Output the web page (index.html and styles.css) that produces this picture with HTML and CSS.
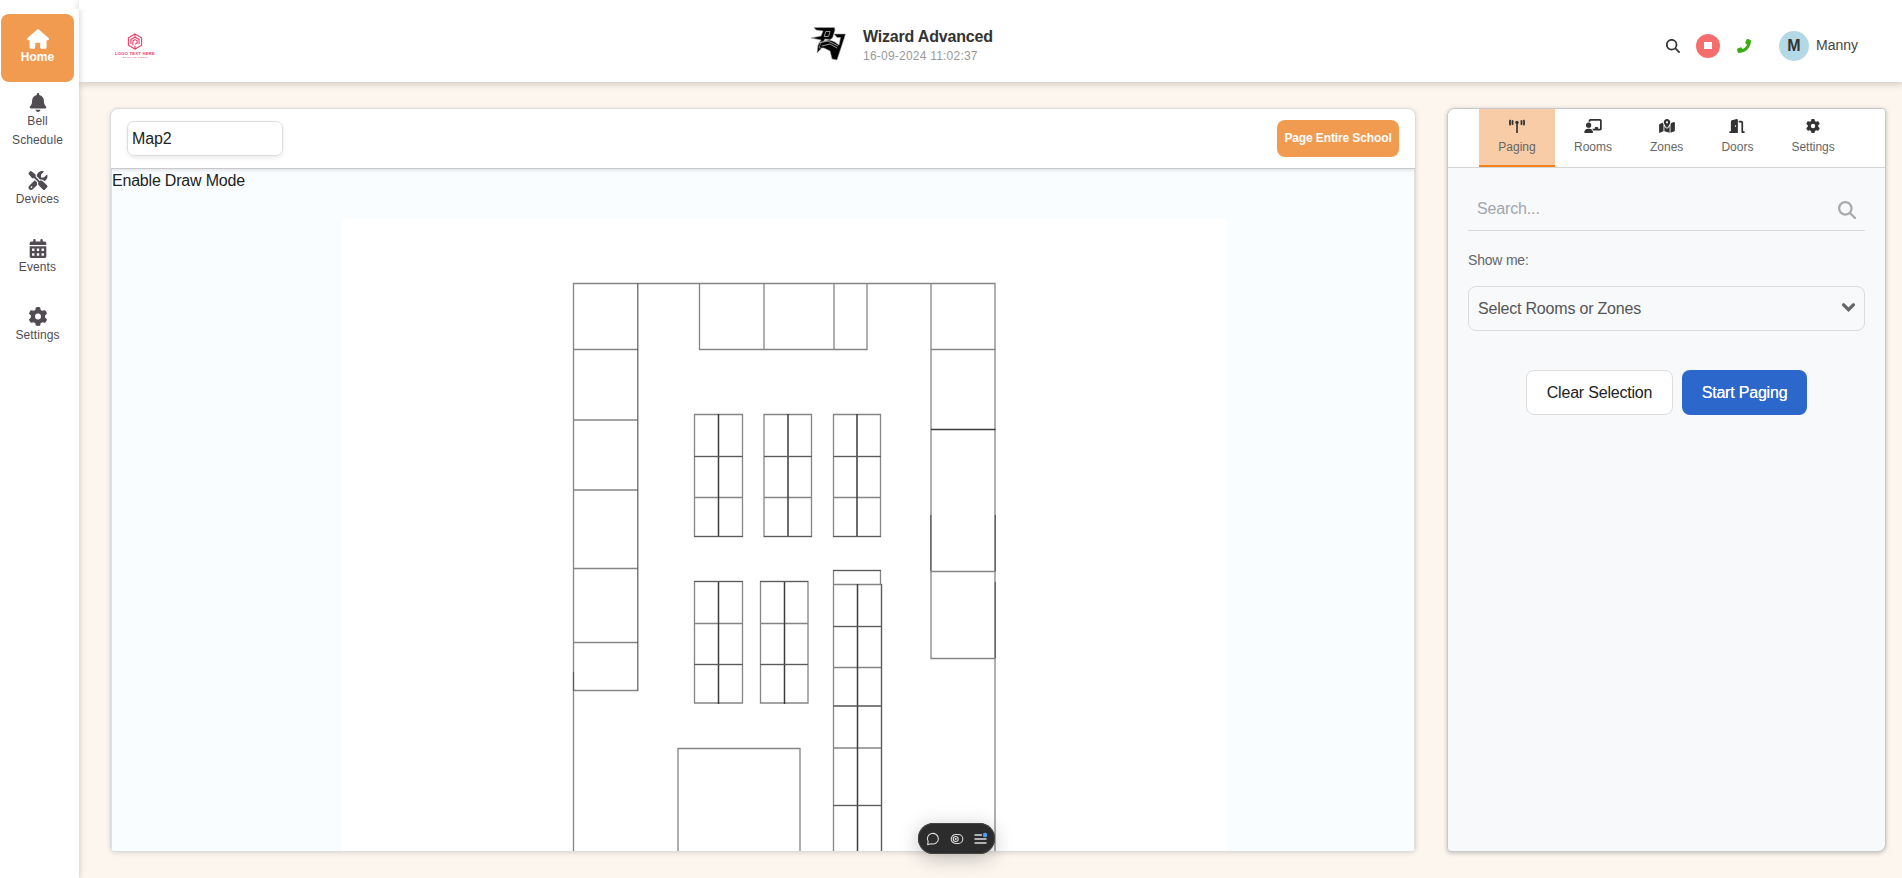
FILE: index.html
```html
<!DOCTYPE html>
<html lang="en">
<head>
<meta charset="utf-8">
<title>Wizard Advanced</title>
<link rel="stylesheet" href="styles.css">
</head>
<body>
<svg class="defs" width="0" height="0">
  <symbol id="gear" viewBox="0 0 512 512"><path d="M495.9 166.6c3.200 8.700.5 18.400-6.400 24.600l-43.300 39.400c1.100 8.300 1.700 16.800 1.700 25.400s-.6 17.100-1.700 25.400l43.300 39.400c6.900 6.200 9.600 15.900 6.400 24.600c-4.400 11.900-9.700 23.300-15.800 34.300l-4.700 8.100c-6.600 11-14 21.400-22.100 31.200c-5.900 7.200-15.700 9.600-24.500 6.800l-55.700-17.700c-13.400 10.300-28.200 18.900-44 25.400l-12.500 57.100c-2 9.100-9 16.300-18.200 17.800c-13.800 2.300-28 3.500-42.500 3.500s-28.700-1.200-42.500-3.500c-9.200-1.500-16.200-8.700-18.200-17.800l-12.500-57.100c-15.800-6.500-30.600-15.100-44-25.400L83.100 425.900c-8.800 2.800-18.600.3-24.500-6.800c-8.100-9.800-15.500-20.200-22.100-31.200l-4.700-8.100c-6.100-11-11.400-22.400-15.800-34.300c-3.200-8.700-.5-18.400 6.400-24.600l43.300-39.400C64.600 273.100 64 264.600 64 256s.6-17.100 1.700-25.400L22.400 191.200c-6.900-6.200-9.600-15.900-6.400-24.600c4.400-11.900 9.700-23.300 15.800-34.300l4.700-8.100c6.600-11 14-21.400 22.100-31.200c5.900-7.200 15.700-9.600 24.500-6.800l55.700 17.700c13.400-10.300 28.200-18.900 44-25.400l12.500-57.100c2-9.100 9-16.300 18.200-17.800C227.300 1.200 241.500 0 256 0s28.700 1.200 42.500 3.500c9.200 1.500 16.200 8.700 18.200 17.800l12.500 57.100c15.800 6.500 30.600 15.100 44 25.400l55.700-17.700c8.800-2.800 18.600-.3 24.500 6.800c8.100 9.800 15.500 20.200 22.100 31.200l4.700 8.100c6.100 11 11.400 22.400 15.800 34.300zM256 336a80 80 0 1 0 0-160 80 80 0 1 0 0 160z"/></symbol>
  <symbol id="glass" viewBox="0 0 512 512"><path d="M416 208c0 45.900-14.900 88.300-40 122.700L502.600 457.400c12.500 12.500 12.500 32.800 0 45.300s-32.800 12.500-45.300 0L330.700 376c-34.400 25.200-76.800 40-122.700 40C93.100 416 0 322.900 0 208S93.100 0 208 0S416 93.100 416 208zM208 352a144 144 0 1 0 0-288 144 144 0 1 0 0 288z"/></symbol>
</svg>
<div class="app">
  <nav class="sidebar">
    <a class="nav-item active"><svg class="home-icon" viewBox="0 0 576 512"><path d="M575.800 255.500c0 18-15 32.100-32 32.100l-32 0 .7 160.200c0 2.700-.2 5.400-.5 8.100l0 16.200c0 22.100-17.900 40-40 40l-64 0-24 0c-22.100 0-40-17.900-40-40l0-88c0-17.700-14.300-32-32-32l-64 0c-17.700 0-32 14.300-32 32l0 88c0 22.100-17.900 40-40 40l-70 0c-22.100 0-40-17.900-40-40l0-184.500-32 0c-18 0-32-14-32-32.100 0-9 3-17 10-24L266.400 8c7-7 15-8 22-8s15 2 21 7L564.800 231.500c8 7 12 15 11 24z"/></svg><span>Home</span></a>
    <a class="nav-item bell"><svg class="nav-icon" viewBox="0 0 448 512"><path d="M224 0c-17.700 0-32 14.300-32 32v19.200C119 66 64 130.600 64 208v18.800c0 47-17.300 92.400-48.500 127.600l-7.400 8.300c-8.400 9.400-10.400 22.900-5.300 34.400S19.400 416 32 416h384c12.600 0 24-7.400 29.200-18.900s3.100-25-5.300-34.400l-7.400-8.300C401.300 319.200 384 273.900 384 226.800V208c0-77.400-55-142-128-156.800V32c0-17.700-14.300-32-32-32zm45.300 493.300c12-12 18.700-28.300 18.700-45.300H160c0 17 6.700 33.300 18.700 45.300S207 512 224 512s33.300-6.700 45.300-18.700z"/></svg><span>Bell<br>Schedule</span></a>
    <a class="nav-item"><svg class="nav-icon" viewBox="0 0 512 512"><path d="M78.600 5C69.100-2.400 55.600-1.500 47 7L7 47c-8.500 8.500-9.400 22-2.100 31.600l80 104c4.500 5.900 11.600 9.400 19 9.400h54.100l109 109c-14.700 29-10 65.400 14.300 89.600l112 112c12.500 12.500 32.800 12.500 45.300 0l64-64c12.500-12.500 12.500-32.800 0-45.300l-112-112c-24.200-24.200-60.600-29-89.600-14.300L192 158V104c0-7.500-3.500-14.500-9.400-19L78.600 5zM19.900 396.100C7.200 408.800 0 426.100 0 444.100C0 481.600 30.400 512 67.900 512c18 0 35.300-7.200 48-19.900L233.700 374.300c-7.800-20.900-9-43.600-3.600-65.100l-61.700-61.700L19.900 396.100zM512 144c0-10.500-1.100-20.700-3.200-30.500c-2.400-11.200-16.100-14.100-24.200-6l-63.900 63.900c-3 3-7.100 4.700-11.300 4.700H352c-8.800 0-16-7.200-16-16V102.600c0-4.200 1.700-8.300 4.700-11.300l63.900-63.900c8.100-8.100 5.200-21.800-6-24.200C388.700 1.100 378.500 0 368 0C288.500 0 224 64.500 224 144l0 .8 85.300 85.300c36-9.100 75.800 .5 104 28.700L429 274.500c49-23 83-72.800 83-130.500zM56 432a24 24 0 1 1 48 0 24 24 0 1 1-48 0z"/></svg><span>Devices</span></a>
    <a class="nav-item"><svg class="nav-icon" viewBox="0 0 448 512"><path fill-rule="evenodd" d="M128 0c17.700 0 32 14.300 32 32V64H288V32c0-17.700 14.300-32 32-32s32 14.300 32 32V64h48c26.500 0 48 21.500 48 48v48H0V112C0 85.500 21.500 64 48 64H96V32c0-17.700 14.300-32 32-32zM0 192H448V464c0 26.500-21.500 48-48 48H48c-26.500 0-48-21.500-48-48V192zm64 64v64h64v-64zm128 0v64h64v-64zm128 0v64h64v-64zM64 384v64h64v-64zm128 0v64h64v-64zm128 0v64h64v-64z"/></svg><span>Events</span></a>
    <a class="nav-item"><svg class="nav-icon"><use href="#gear"/></svg><span>Settings</span></a>
  </nav>
  <div class="main">
    <header class="topbar">
      <div class="brand">
        <svg class="brand-mark" viewBox="0 0 16 18"><path d="M8 1 15 5v8l-7 4-7-4V5zM8 1v3.500M8 17v-3.500M3.700 12V6.800L8 4.500l4.300 2.300V12M5.800 13.200V8.300L8 7l2.200 1.300v2.500L8 12"/></svg>
        <span class="brand-name">LOGO TEXT HERE</span>
        <span class="brand-slogan">SLOGAN HERE</span>
      </div>
      <div class="school">
        <svg class="school-logo" viewBox="0 0 36 36">
          <path class="edge" d="M4 .5H24.500L25 3 22.500 11 19.500 13 18 12.500 15 12 11.500 18 11 22 7 26 8 18 11 13 1 11 11 9 13 4 6 3z"/>
          <path class="edge" d="M11 15 19 13 24 14.500 29 18 30.500 10.500H27L24 7H35.500L34 12 27 33 22 32 20 24 14 21 9 21z"/>
          <path class="gap" d="M15.800 4.500h4.200l-1.500 5h-4.300zM8 16l10-2 10 5M12 19l8-2 7 4"/>
        </svg>
        <div class="school-text"><b>Wizard Advanced</b><span>16-09-2024 11:02:37</span></div>
      </div>
      <div class="tools">
        <svg class="find"><use href="#glass"/></svg>
        <span class="stop"><i></i></span>
        <svg class="phone" viewBox="0 0 512 512"><path d="M347.100 24.600c7.700-18.600 28-28.500 47.400-23.200l88 24C499.900 30.200 512 46 512 64c0 247.400-200.600 448-448 448c-18 0-33.800-12.100-38.600-29.500l-24-88c-5.300-19.400 4.600-39.700 23.200-47.400l96-40c16.300-6.800 35.200-2.100 46.300 11.600L207.300 368c70.400-33.300 127.400-90.300 160.700-160.700L318.700 167c-13.700-11.200-18.400-30-11.600-46.300l40-96z"/></svg>
        <span class="avatar">M</span><span class="user">Manny</span>
      </div>
    </header>
    <div class="content">
      <section class="map-card">
        <div class="map-head"><div class="map-name">Map2</div><button class="page-all">Page Entire School</button></div>
        <div class="map-body">
          <div class="mode">Enable Draw Mode</div>
          <svg class="plan" viewBox="342 218 885 633">
            <rect x="342" y="218" width="885" height="633" fill="#fff"/>
            <g class="walls">
              <path d="M573.500 851V283.500H995V851M573.500 349.500H638M573.500 420H638M573.500 490H638M573.500 568.500H638M573.500 642.500H638M573.500 690.500H638"/>
              <path d="M699.500 283V349.500H867V283M764 283V349.500M834 283V349.500M931 283V658.500H995.500M931 349.500H995.500M931 571.500H995.500"/>
              <path d="M694.500 414.500H742.500V536.500H694.500zM694.500 456.500H742.500M694.500 497.500H742.500M764 414.500H811.500V536.500H764zM764 456.500H811.500M764 497.500H811.500M833.500 414.500H880.500V536.500H833.500zM833.500 456.500H880.500M833.500 497.500H880.500"/>
              <path d="M694.500 581.500H742.500V703H694.500zM694.500 623.500H742.500M694.500 664.500H742.500M760.500 581.500H808V703H760.500zM760.500 623.500H808M760.500 664.500H808"/>
              <path d="M833.500 851V570.500H880.500V584.500M833.500 584.500H881.500V851M833.500 626.500H881.500M833.500 667.500H881.500M833.500 706H881.500M833.500 748H881.500M833.500 805.500H881.500M678 851V748.500H800V851"/>
            </g>
            <path class="dark" d="M718.500 414V537M788 414V537M857 414V537M718.500 581V704M784.500 581V704M857.500 584V851M931 429.500H995.500"/>
            <path class="mid" d="M637.800 283V691M694 456.500H743M764 456.500H812M833 456.500H881M694 536.500H743M764 536.500H812M833 536.500H881M694 581.500H743M760 581.500H808M694 664.500H743M760 664.500H808M833 626.500H882M833 706H882M833 805.500H882M833 570.500H881M881.500 584V851M573.500 672V691M930.800 515V571M995.300 515V571M995.300 582V658"/>
          </svg>
        </div>
      </section>
      <aside class="panel">
        <div class="tabs">
          <div class="tab on"><svg viewBox="0 0 576 512"><path d="M288 160v352" stroke="currentColor" stroke-width="60"/><circle cx="288" cy="130" r="62"/><path d="M50 30q-50 95 0 200M140 50q-40 80 0 160M526 30q50 95 0 200M436 50q40 80 0 160" fill="none" stroke="currentColor" stroke-width="66"/></svg><span>Paging</span></div>
          <div class="tab rooms"><svg viewBox="0 0 640 512"><path d="M160 64c0-35.300 28.700-64 64-64H576c35.300 0 64 28.700 64 64V352c0 35.300-28.700 64-64 64H336.800c-11.800-25.500-29.900-47.500-52.400-64H384V320c0-17.700 14.300-32 32-32h64c17.700 0 32 14.300 32 32v32h64V64L224 64v49.100C205.200 102.200 183.300 96 160 96V64zm0 64a96 96 0 1 1 0 192 96 96 0 1 1 0-192zM133.300 352h53.300C260.300 352 320 411.700 320 485.300c0 14.700-11.900 26.700-26.700 26.700H26.700C11.900 512 0 500.100 0 485.300C0 411.700 59.700 352 133.300 352z"/></svg><span>Rooms</span></div>
          <div class="tab"><svg viewBox="0 0 576 512"><path fill-rule="evenodd" d="M408 120c0 54.600-73.100 151.900-105.200 192c-7.700 9.600-22 9.600-29.600 0C241.100 271.900 168 174.600 168 120C168 53.700 221.700 0 288 0s120 53.700 120 120zM288 160a40 40 0 1 0 0-80 40 40 0 1 0 0 80zM425.600 179.800c6.100-10 11.700-20.400 16.400-30.900l91.600-34.800c20-8 42.400 6.700 42.400 28.200V422.900c0 9.800-6 18.600-15.100 22.300L416 503V200.400c3.500-6.900 6.700-13.800 9.600-20.600zM137.600 138.300c2.400 14.100 7.200 28.300 12.800 41.500c2.900 6.800 6.100 13.700 9.600 20.600V451.800L32.900 502.700C17.100 509 0 497.400 0 480.400V209.600c0-9.800 6-18.600 15.100-22.300l122.500-49zM327.800 332c13.900-17.400 35.700-45.700 56.200-77V504.300L192 449.400V255c20.500 31.300 42.300 59.600 56.200 77c20.500 25.600 59.100 25.600 79.600 0z"/></svg><span>Zones</span></div>
          <div class="tab"><svg viewBox="0 0 576 512"><path fill-rule="evenodd" d="M320 32c0-9.900-4.500-19.200-12.300-25.200S289.800-1.400 280.200 1l-179.900 45C79 51.300 64 70.500 64 92.500V448H32c-17.700 0-32 14.300-32 32s14.300 32 32 32H320V32zM256 256c0 17.700-10.700 32-24 32s-24-14.300-24-32s10.700-32 24-32s24 14.300 24 32zm96-128h96V480c0 17.700 14.300 32 32 32h64c17.700 0 32-14.300 32-32s-14.300-32-32-32H512V128c0-35.300-28.700-64-64-64H352v64z"/></svg><span>Doors</span></div>
          <div class="tab"><svg><use href="#gear"/></svg><span>Settings</span></div>
        </div>
        <div class="panel-body">
          <div class="search"><span>Search...</span><svg><use href="#glass"/></svg></div>
          <div class="label">Show me:</div>
          <div class="select"><span>Select Rooms or Zones</span><svg viewBox="0 0 12 8"><path d="M1.500 1.500 6 6l4.500-4.500" fill="none" stroke="#666" stroke-width="3" stroke-linecap="round"/></svg></div>
          <div class="actions"><button class="clear">Clear Selection</button><button class="start">Start Paging</button></div>
        </div>
      </aside>
    </div>
  </div>
</div>
<div class="dock">
  <svg viewBox="0 0 14 14"><path d="M1.700 12.600 2.100 9.300A5.500 5.300 0 1 1 5.500 11.800z"/></svg>
  <svg viewBox="0 0 14 14"><rect x="1.200" y="2.500" width="11.600" height="9" rx="4.500"/><circle cx="5.700" cy="7" r="2.500"/><circle cx="5.700" cy="7" r=".5"/></svg>
  <svg viewBox="0 0 14 14"><path d="M1.500 3h7.500M1.500 7h12M1.500 11h12" stroke-width="1.400"/><circle class="dot" cx="12" cy="3" r="2.200"/></svg>
</div>
</body>
</html>
```
FILE: styles.css
```css
* { box-sizing: border-box; }
body { margin: 0; height: 878px; overflow: hidden; background: #fff; font-family: "Liberation Sans", Arial, sans-serif; color: #222; }
.defs { position: absolute; }
svg { fill: currentColor; flex: none; }
button { font-family: inherit; border: 0; }
.app { display: flex; height: 878px; }
.sidebar { width: 79px; margin-top: 9px; padding: 5px 0 0 1px; background: #fff; box-shadow: 0 0 6px rgba(0,0,0,.22); z-index: 1; display: flex; flex-direction: column; color: #514b52; clip-path: inset(0 -10px 0 0); }
.nav-item { width: 73px; height: 68px; display: flex; flex-direction: column; align-items: center; padding-top: 14px; font-size: 12px; line-height: 19px; text-align: center; letter-spacing: .1px; }
.nav-item:not(.active):not(.bell) { padding-top: 15px; }
.nav-item.active { background: #f19b50; color: #fff; border-radius: 8px; font-weight: bold; padding-top: 15px; line-height: 17px; letter-spacing: 0; }
.nav-item.bell { height: 74px; padding-top: 11px; }
.nav-icon { width: 20px; height: 19px; }
.home-icon { width: 22px; height: 20px; }
.main { flex: 1; display: flex; flex-direction: column; background: #fcf6ef; }
.topbar { height: 82px; background: #fff; box-shadow: 0 2px 7px rgba(80,60,50,.25); display: flex; align-items: center; position: relative; padding-top: 9px; }
.brand { width: 110px; display: flex; flex-direction: column; align-items: center; color: #e53a72; font-weight: bold; white-space: nowrap; padding-left: 2px; }
.brand-mark { width: 16px; height: 17px; fill: none; stroke: #e8406a; stroke-width: 1.200; }
.brand-name { font-size: 4.200px; line-height: 5px; margin-top: 1px; letter-spacing: .2px; }
.brand-slogan { font-size: 2.500px; line-height: 3px; letter-spacing: .6px; }
.school { margin-left: 621px; display: flex; gap: 17px; }
.school-logo { width: 36px; height: 36px; margin-top: 2px; }
.school-logo .edge { fill: #050505; stroke: #aaa; stroke-width: .6; }
.school-logo .gap { fill: none; stroke: #bbb; stroke-width: .8; }
.school-text { display: flex; flex-direction: column; width: 160px; padding-top: 2px; }
.school-text b { font-size: 16px; line-height: 19px; color: #333; white-space: nowrap; letter-spacing: -.19px; }
.school-text span { font-size: 12px; line-height: 21px; color: #999; letter-spacing: .22px; }
.tools { margin-left: auto; margin-right: 44px; display: flex; align-items: center; color: #333; }
.find { width: 14px; height: 14px; }
.stop { margin-left: 16px; width: 24px; height: 24px; border-radius: 50%; background: #f66d6d; display: grid; place-items: center; }
.stop i { width: 8px; height: 7px; background: #fff; }
.phone { width: 14px; height: 14px; margin-left: 17px; color: #3bad13; }
.avatar { margin-left: 28px; width: 30px; height: 30px; border-radius: 50%; background: #b3d9e6; font-size: 16px; font-weight: bold; line-height: 30px; text-align: center; }
.user { margin-left: 7px; font-size: 14px; color: #444; padding-bottom: 2px; }
.content { flex: 1; display: flex; gap: 31px; padding: 26px 16px 26px 31px; min-height: 0; }
.map-card { width: 1306px; height: 744px; border: 1px solid #ddd; border-radius: 8px 8px 5px 5px; background: #fff; box-shadow: 0 1px 5px rgba(0,0,0,.13); overflow: hidden; display: flex; flex-direction: column; }
.map-head { height: 60px; border-bottom: 1px solid #c8c8c8; display: flex; justify-content: space-between; align-items: center; padding: 0 16px; box-shadow: 0 1px 4px rgba(0,0,0,.12); position: relative; }
.map-name { width: 156px; height: 35px; border: 1px solid #ddd; border-radius: 7px; padding-left: 4px; font-size: 16px; line-height: 33px; letter-spacing: -.15px; box-shadow: 0 2px 4px rgba(0,0,0,.08); }
.page-all { width: 122px; height: 37px; border-radius: 8px; background: #f19b50; color: #fff; font-size: 12px; font-weight: bold; padding: 0 0 2px; white-space: nowrap; letter-spacing: -.12px; }
.map-body { flex: 1; background: #fafdff; min-height: 0; border: 0 solid #e0e0e0; border-width: 0 1px; }
.mode { height: 49px; line-height: 24px; font-size: 16px; letter-spacing: -.2px; }
.plan { display: block; width: 885px; height: 633px; margin-left: 230px; }
.walls { fill: none; stroke: #858585; stroke-width: 1.300; }
.dark { fill: none; stroke: #3c3c3c; stroke-width: 1.500; }
.mid { fill: none; stroke: #5c5c5c; stroke-width: 1.200; }
.panel { width: 439px; height: 744px; border: 1px solid #c9c9c9; border-radius: 8px 4px 8px 4px; background: #f8f9fb; box-shadow: 0 1px 4px rgba(0,0,0,.25); overflow: hidden; }
.tabs { height: 59px; background: #fff; border-bottom: 1px solid #d5d5d5; display: flex; padding-left: 31px; }
.tab { padding: 10px 19px 0; display: flex; flex-direction: column; align-items: center; font-size: 12px; color: #666; gap: 7px; }
.tab svg { width: 16px; height: 14px; color: #333; }
.tab.rooms svg { width: 18px; }
.tab.on { width: 76px; background: #f7cca6; border-bottom: 2px solid #f3801f; }
.panel-body { padding: 18px 20px; }
.search { height: 45px; border-bottom: 1px solid #d5d8dc; display: flex; justify-content: space-between; align-items: center; padding: 0 9px; font-size: 16px; letter-spacing: -.15px; color: #a0a6b0; }
.search span { padding-top: 2px; }
.search svg { width: 18px; height: 18px; color: #aaa; margin-top: 3px; }
.label { margin-top: 21px; font-size: 14px; line-height: 16px; letter-spacing: -.2px; color: #666; }
.select { margin-top: 18px; height: 45px; border: 1px solid #dadcdf; border-radius: 8px; display: flex; justify-content: space-between; align-items: center; padding: 0 9px; font-size: 16px; letter-spacing: -.2px; color: #555; }
.select svg { width: 13px; height: 9px; margin-top: -3px; }
.actions { margin-top: 39px; display: flex; justify-content: center; gap: 9px; }
.actions button { height: 45px; border-radius: 8px; font-size: 16px; padding: 0; letter-spacing: -.2px; }
.actions .clear { width: 147px; background: #fff; color: #222; border: 1px solid #ddd; }
.actions .start { width: 125px; background: #2c67cc; color: #fff; text-shadow: 0 0 .5px #fff; }
.dock { position: absolute; left: 918px; top: 823px; width: 77px; height: 31px; border-radius: 16px; background: #2c2c2c; box-shadow: 0 0 0 1px #444 inset, 0 4px 20px rgba(0,0,0,.25); display: flex; align-items: center; justify-content: space-between; padding: 0 8px; z-index: 3; }
.dock svg { width: 14px; height: 14px; fill: none; stroke: #ddd; stroke-width: 1.100; }
.dock .dot { fill: #4d9dff; stroke: none; }
```
